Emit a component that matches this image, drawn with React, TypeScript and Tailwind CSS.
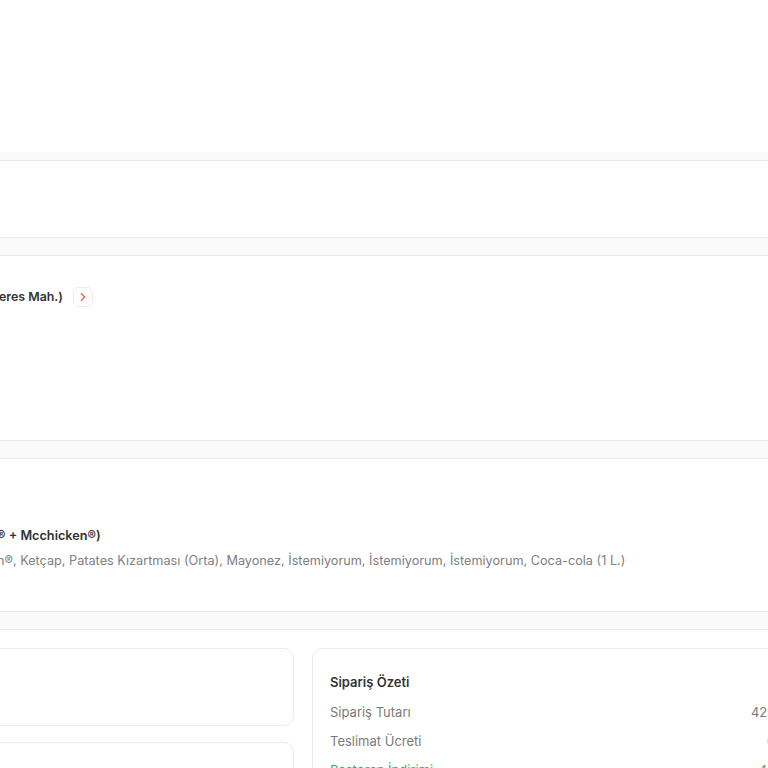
import { ChevronRight } from 'lucide-react'

const summary = [
  { label: 'Sipariş Tutarı', value: '425,00 TL', tone: 'text-[#7a7a7a]' },
  { label: 'Teslimat Ücreti', value: '0,00 TL', tone: 'text-[#7a7a7a]' },
  { label: 'Restoran İndirimi', value: '-45,00 TL', tone: 'text-[#3fae4f]' },
]

function Band({ className = '', children }: { className?: string; children?: React.ReactNode }) {
  return (
    <div className={`bg-white border-y border-[#e9e9e9] ${className}`}>{children}</div>
  )
}

export default function App() {
  return (
    <div
      className="h-[768px] w-full overflow-hidden bg-[#fafafa] text-[13px] text-[#2f2f2f]"
      style={{ fontFamily: 'Inter, "Noto Sans", sans-serif' }}
    >
      {/* restaurant header, scrolled past */}
      <div className="h-[152px] bg-white" />

      <div className="mt-[8px] flex flex-col gap-[17px]">
        {/* order status */}
        <Band className="h-[78px]" />

        {/* delivery address */}
        <Band className="h-[186px]">
          <div className="flex items-center gap-[10px] pt-[31px]">
            <span className="-ml-px text-[12.4px] leading-[18px] font-semibold text-[#333]">eres Mah.)</span>
            <button className="flex h-5 w-5 items-center justify-center rounded-md border border-[#f1ebe8] bg-white">
              <ChevronRight className="h-3.5 w-3.5 text-[#d9683f]" strokeWidth={2} />
            </button>
          </div>
        </Band>

        {/* order items */}
        <Band className="h-[154px]">
          <div className="flex flex-col gap-[7px] pt-[68px] text-[12.7px] leading-[18px]">
            <span className="-ml-[3px] font-semibold text-[#333]">® + Mcchicken®)</span>
            <span className="-ml-[3px] text-[#808080]">
              n®, Ketçap, Patates Kızartması (Orta), Mayonez, İstemiyorum, İstemiyorum, İstemiyorum, Coca-cola (1 L.)
            </span>
          </div>
        </Band>

        <div className="border-t border-[#ececec] bg-white pt-[18px]">
          <div className="flex gap-[18px]">
            <div className="-ml-[60px] flex w-[354px] shrink-0 flex-col gap-[16px]">
              <div className="h-[78px] rounded-[10px] border border-[#ececec] bg-white" />
              <div className="h-[60px] rounded-[10px] border border-[#ececec] bg-white" />
            </div>

            <div className="w-[520px] shrink-0 rounded-[10px] border border-[#ececec] bg-white px-[17px] pt-[24px]">
              <div className="font-semibold text-[#333]">Sipariş Özeti</div>
              <div className="mt-[10px] flex flex-col gap-[11px]">
                {summary.map((row) => (
                  <div key={row.label} className={`flex justify-between leading-[18px] ${row.tone}`}>
                    <span>{row.label}</span>
                    <span>{row.value}</span>
                  </div>
                ))}
              </div>
            </div>
          </div>
        </div>
      </div>
    </div>
  )
}
